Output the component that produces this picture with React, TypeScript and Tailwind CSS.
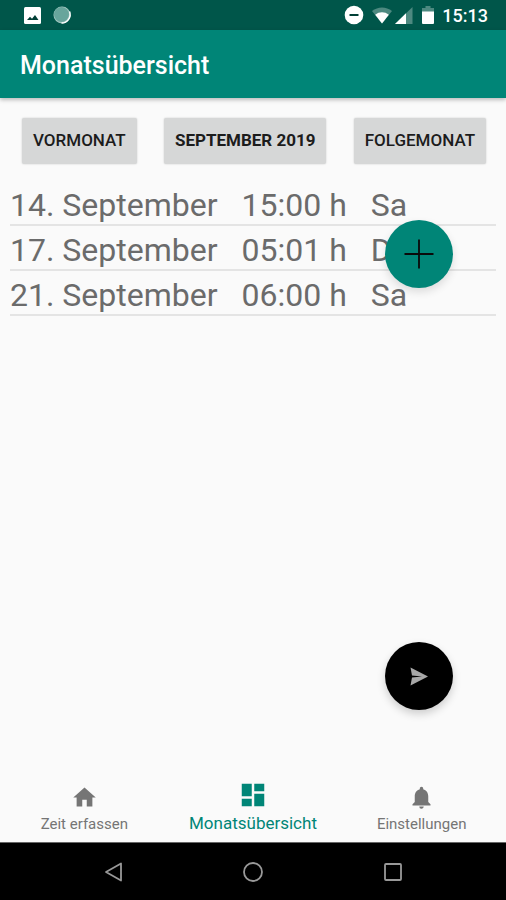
import { MdDashboard, MdHome, MdNotifications } from "react-icons/md";

interface Entry {
  date: string;
  hours: string;
  day: string;
}

const ENTRIES: Entry[] = [
  { date: "14. September", hours: "15:00 h", day: "Sa" },
  { date: "17. September", hours: "05:01 h", day: "Di" },
  { date: "21. September", hours: "06:00 h", day: "Sa" },
];

const monthButton =
  "h-[46px] rounded-xs bg-[#d6d7d7] px-[11px] text-[17px] uppercase text-[#1c1c1c] shadow-[0_0_2px_rgba(0,0,0,0.2)]";

function StatusBar() {
  return (
    <div className="flex h-[30px] items-center bg-[#00564a] pl-[22px] pr-[18px] text-white">
      <svg width="21" height="20" viewBox="0 0 21 20">
        <rect x="2" y="2" width="17" height="17" rx="1.5" fill="#fff" />
        <path d="M5 15l3-3.300 2 2L13 10l3.500 5z" fill="#003f36" />
      </svg>
      <svg className="ml-[9px]" width="20" height="20" viewBox="0 0 20 20">
        <circle cx="10" cy="10" r="8.500" fill="#a4c8c2" />
        <circle cx="9.500" cy="9.500" r="7.500" fill="#68a59c" />
        <path d="M17.600 6.500a8.500 8.500 0 0 1-8 11.500" fill="none" stroke="#fff" strokeWidth="1.400" />
      </svg>
      <div className="ml-auto flex items-center">
        <svg width="20" height="20" viewBox="0 0 20 20">
          <circle cx="10" cy="10" r="9.300" fill="#fff" />
          <path d="M5.500 10h9" stroke="#003f36" strokeWidth="2" />
        </svg>
        <svg className="ml-[7px]" width="22" height="20" viewBox="0 0 22 20">
          <path d="M1 6C7 1.300 15 1.300 21 6L11 18.500z" fill="#4d8980" />
          <path d="M4.200 9.800c4-3.300 9.600-3.300 13.600 0L11 18.500z" fill="#fff" />
        </svg>
        <svg className="ml-px" width="20" height="20" viewBox="0 0 20 20">
          <path d="M1 19L18.500 2v17z" fill="#4d8980" />
          <path d="M1 19L12 8.300V19z" fill="#fff" />
        </svg>
        <svg className="ml-[7px]" width="14" height="20" viewBox="0 0 14 20">
          <path d="M1 3h3.500V1h5v2H13v5H1z" fill="#4d8980" />
          <path d="M1 6.500h12V18a1 1 0 0 1-1 1H2a1 1 0 0 1-1-1z" fill="#fff" />
        </svg>
        <span className="ml-[7px] mt-[2px] text-lg leading-none font-medium">15:13</span>
      </div>
    </div>
  );
}

function EntryTable() {
  return (
    <table className="w-full border-collapse text-left text-[32px] leading-[37px] text-[#6b6b6b]">
      <tbody>
        {ENTRIES.map((entry) => (
          <tr key={entry.date} className="border-b-2 border-[#e4e4e4]">
            <td className="whitespace-nowrap pt-[6px] pr-6">{entry.date}</td>
            <td className="whitespace-nowrap pt-[6px] pr-6">{entry.hours}</td>
            <td className="w-full pt-[6px]">{entry.day}</td>
          </tr>
        ))}
      </tbody>
    </table>
  );
}

function BottomNav() {
  return (
    <nav className="grid h-[72px] grid-cols-3 text-[15px] leading-5 text-[#757575]">
      <a href="#erfassen" className="flex flex-col items-center pt-[14px]">
        <MdHome size={27} />
        <span className="mt-[3px]">Zeit erfassen</span>
      </a>
      <a href="#monat" className="flex flex-col items-center pt-[10px] text-[#008577]">
        <MdDashboard size={30} />
        <span className="mt-[3px] text-[17px]">Monatsübersicht</span>
      </a>
      <a href="#einstellungen" className="flex flex-col items-center pt-[14px]">
        <MdNotifications size={27} />
        <span className="mt-[3px]">Einstellungen</span>
      </a>
    </nav>
  );
}

function SystemBar() {
  return (
    <div className="flex h-[58px] items-center justify-center gap-[116px] border-t border-[#666] bg-black">
      <button aria-label="Zurück">
        <svg width="24" height="24" viewBox="0 0 24 24" fill="none" stroke="#999" strokeWidth="1.800">
          <path d="M20 3.500v17L5 12z" strokeLinejoin="round" />
        </svg>
      </button>
      <button aria-label="Startbildschirm">
        <svg width="24" height="24" viewBox="0 0 24 24" fill="none" stroke="#999" strokeWidth="1.800">
          <circle cx="12" cy="12" r="9" />
        </svg>
      </button>
      <button aria-label="Letzte Apps">
        <svg width="24" height="24" viewBox="0 0 24 24" fill="none" stroke="#999" strokeWidth="1.800">
          <rect x="4" y="4" width="16" height="16" rx="1" />
        </svg>
      </button>
    </div>
  );
}

export default function App() {
  return (
    <div className="flex min-h-screen flex-col bg-[#fafafa] font-['Roboto',sans-serif]">
      <StatusBar />
      <header className="flex h-[68px] items-center bg-[#008577] px-5 shadow-[0_2px_4px_rgba(0,0,0,0.25)]">
        <h1 className="mt-1 text-[25px] font-medium text-white">Monatsübersicht</h1>
      </header>
      <main className="relative flex-1 px-[10px] pt-5">
        <div className="flex justify-between pr-[10px] pl-3">
          <button className={`${monthButton} font-medium`}>Vormonat</button>
          <button className={`${monthButton} font-bold`}>September 2019</button>
          <button className={`${monthButton} font-medium`}>Folgemonat</button>
        </div>
        <div className="mt-[17px]">
          <EntryTable />
        </div>
        <button
          aria-label="Eintrag hinzufügen"
          className="absolute top-[122px] right-[53px] flex size-[68px] items-center justify-center rounded-full bg-[#008577] shadow-[0_4px_8px_rgba(0,0,0,0.12)]"
        >
          <svg width="30" height="30" viewBox="0 0 30 30" stroke="#0a0a0a" strokeWidth="1.800">
            <path d="M15 .5v29M.5 15h29" />
          </svg>
        </button>
        <button
          aria-label="Senden"
          className="absolute right-[53px] bottom-[60px] flex size-[68px] items-center justify-center rounded-full bg-black shadow-[0_4px_8px_rgba(0,0,0,0.18)]"
        >
          <svg width="20" height="20" viewBox="0 0 20 20">
            <path d="M1.500 1.500L19 10.500 1.500 19.500l1.500-8L13 10.500 3 9.500z" fill="#a8a8a8" />
          </svg>
        </button>
      </main>
      <BottomNav />
      <SystemBar />
    </div>
  );
}
